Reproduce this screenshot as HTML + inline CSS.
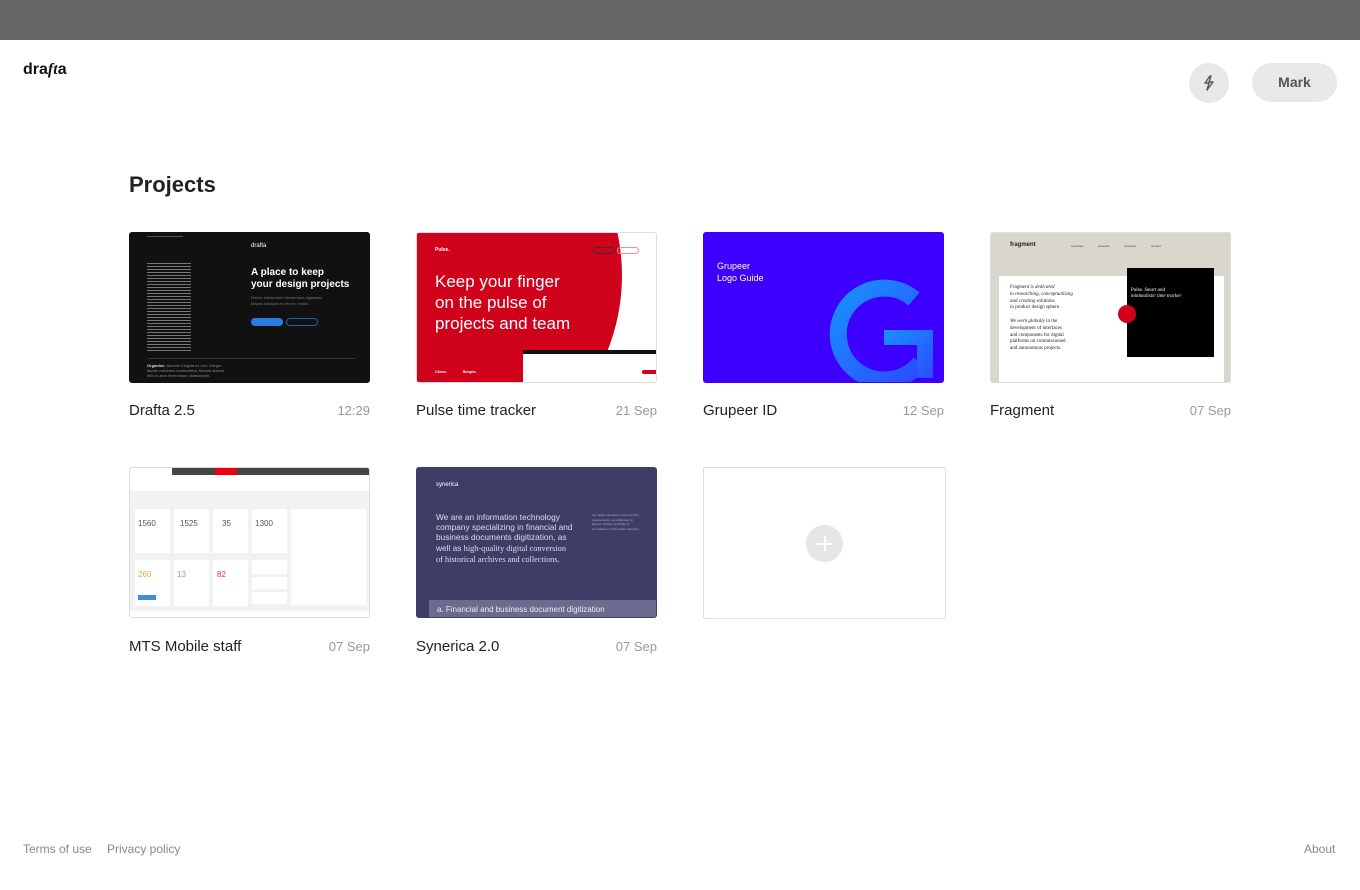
<!DOCTYPE html>
<html><head><meta charset="utf-8"><style>
*{margin:0;padding:0;box-sizing:border-box}
body{width:1360px;height:890px;background:#fff;font-family:"Liberation Sans",sans-serif;position:relative;overflow:hidden;color:#222}
.top{position:absolute;left:0;top:0;width:1360px;height:40px;background:#666}
.abs{position:absolute}
.card{position:absolute;width:241px;height:151px;border-radius:3px;overflow:hidden;border:1px solid #ddd}
.t{position:absolute;font-size:15px;color:#222}
.d{position:absolute;font-size:13px;color:#999;text-align:right;width:100px}
.foot{position:absolute;top:842px;font-size:12px;color:#888}
</style></head><body>
<div class="top"></div>
<div class="abs" style="left:23px;top:61px;font-size:16px;font-weight:bold;color:#111">dra<i style="font-family:'Liberation Serif',serif">ft</i>a</div>
<div class="abs" style="left:1189px;top:63px;width:40px;height:40px;border-radius:50%;background:#e8e8e8">
<svg width="40" height="40" viewBox="0 0 40 40"><path d="M21 13l-5 7h4l-2 7 6-8h-4l2-6z" fill="none" stroke="#555" stroke-width="1.4" stroke-linejoin="round"/></svg></div>
<div class="abs" style="left:1252px;top:63px;width:85px;height:39px;border-radius:20px;background:#e8e8e8;font-size:14px;font-weight:bold;color:#555;text-align:center;line-height:39px">Mark</div>
<div class="abs" style="left:129px;top:172px;font-size:22px;font-weight:bold;color:#222">Projects</div>

<!-- Drafta -->
<div class="card" style="left:129px;top:232px;background:#111;border-color:#111">
<div class="abs" style="left:17px;top:3px;width:36px;height:1px;background:#555"></div>
<div class="abs" style="left:17px;top:30px;width:44px;height:90px;background:repeating-linear-gradient(#777 0 1px,transparent 1px 3px)"></div>
<div class="abs" style="left:121px;top:10px;color:#fff;font-size:6px">drafta</div>
<div class="abs" style="left:121px;top:34px;color:#fff;font-size:10px;font-weight:bold;line-height:12px">A place to keep<br>your design projects</div>
<div class="abs" style="left:121px;top:62px;color:#777;font-size:4px;line-height:6px">Donec elementum elementum dignissim.<br>Mauris volutpat et elit nec mollis.</div>
<div class="abs" style="left:121px;top:85px;width:32px;height:8px;border-radius:4px;background:#2a7de1"></div>
<div class="abs" style="left:156px;top:85px;width:32px;height:8px;border-radius:4px;border:1px solid #2a5cb0"></div>
<div class="abs" style="left:17px;top:125px;width:208px;height:1px;background:#333"></div>
<div class="abs" style="left:17px;top:130px;color:#888;font-size:4px;line-height:5px"><b style="color:#ddd">Organise.</b> Aenean fringilla ex orci. Integer<br>iaculis maximus consectetur. Mauris dictum<br>felis in arcu fermentum ullamcorper.</div>
</div>
<div class="t" style="left:129px;top:402px">Drafta 2.5</div><div class="d" style="left:270px;top:403px">12:29</div>

<!-- Pulse -->
<div class="card" style="left:416px;top:232px;background:#fff">
<div class="abs" style="left:-200px;top:-160px;width:405px;height:405px;border-radius:50%;background:#d0021b"></div>
<div class="abs" style="left:18px;top:14px;color:#fff;font-size:5px;font-weight:bold">Pulse.</div>
<div class="abs" style="left:18px;top:38px;color:#fff;font-size:17px;line-height:21px">Keep your finger<br>on the pulse of<br>projects and team</div>
<div class="abs" style="left:176px;top:14px;width:22px;height:7px;border:1px solid #333;border-radius:4px"></div>
<div class="abs" style="left:200px;top:14px;width:22px;height:7px;border:1px solid #f88;border-radius:4px"></div>
<div class="abs" style="left:106px;top:117px;width:136px;height:36px;background:#fff;border-top:4px solid #111"></div>
<div class="abs" style="left:225px;top:137px;width:15px;height:4px;background:#d0021b;border-radius:2px"></div>
<div class="abs" style="left:18px;top:136px;color:#fff;font-size:4px;font-weight:bold">Clean.&nbsp;&nbsp;&nbsp;&nbsp;&nbsp;&nbsp;&nbsp;&nbsp;&nbsp;&nbsp;&nbsp;&nbsp;&nbsp;&nbsp;Simple.</div>
</div>
<div class="t" style="left:416px;top:402px">Pulse time tracker</div><div class="d" style="left:557px;top:403px">21 Sep</div>

<!-- Grupeer -->
<div class="card" style="left:703px;top:232px;background:#3d00ff;border-color:#3d00ff">
<div class="abs" style="left:13px;top:27px;color:#fff;font-size:9px;line-height:12px">Grupeer<br>Logo Guide</div>
<svg class="abs" style="left:118px;top:34px" width="115" height="115" viewBox="0 0 115 115"><defs><linearGradient id="g" x1="0" y1="0" x2="1" y2="1"><stop offset="0" stop-color="#1a90ff"/><stop offset="1" stop-color="#2a4cff"/></linearGradient></defs>
<path d="M92 32A46 46 0 1 0 98 96" fill="none" stroke="url(#g)" stroke-width="17"/><path d="M62 63h49v48h-16v-33h-33z" fill="url(#g)"/></svg>
</div>
<div class="t" style="left:703px;top:402px">Grupeer ID</div><div class="d" style="left:844px;top:403px">12 Sep</div>

<!-- Fragment -->
<div class="card" style="left:990px;top:232px;background:#d9d6ce">
<div class="abs" style="left:19px;top:9px;font-size:6px;font-weight:bold;color:#222">fragment</div>
<div class="abs" style="left:80px;top:11px;font-size:3px;color:#444;word-spacing:14px">expertise selected company contact</div>
<div class="abs" style="left:8px;top:43px;width:225px;height:110px;background:#fff"></div>
<div class="abs" style="left:19px;top:52px;font-family:'Liberation Serif',serif;font-size:5px;line-height:6.8px;color:#222">Fragment <i>is dedicated<br>to researching, conceptualising<br>and creating</i> solutions<br>in product design sphere.<br><br><i>We work globally</i> in the<br>development of interfaces<br>and components for digital<br>platforms on commissioned<br>and autonomous projects.</div>
<div class="abs" style="left:136px;top:35px;width:87px;height:89px;background:#000"></div>
<div class="abs" style="left:140px;top:55px;font-family:'Liberation Serif',serif;font-size:5px;color:#fff;line-height:6px">Pulse. <i>Smart and<br>minimalistic time tracker</i></div>
<div class="abs" style="left:127px;top:72px;width:18px;height:18px;border-radius:50%;background:#d0021b"></div>
</div>
<div class="t" style="left:990px;top:402px">Fragment</div><div class="d" style="left:1131px;top:403px">07 Sep</div>

<!-- MTS -->
<div class="card" style="left:129px;top:467px;background:#f2f2f2">
<div class="abs" style="left:0;top:0;width:241px;height:7px;background:#444"></div>
<div class="abs" style="left:0;top:0;width:42px;height:7px;background:#fff"></div>
<div class="abs" style="left:85px;top:0;width:22px;height:7px;background:#e01"></div>
<div class="abs" style="left:0;top:7px;width:241px;height:16px;background:#fff"></div>
<div class="abs" style="left:5px;top:41px;width:35px;height:44px;background:#fff"></div>
<div class="abs" style="left:44px;top:41px;width:35px;height:44px;background:#fff"></div>
<div class="abs" style="left:83px;top:41px;width:35px;height:44px;background:#fff"></div>
<div class="abs" style="left:122px;top:41px;width:35px;height:44px;background:#fff"></div>
<div class="abs" style="left:5px;top:92px;width:35px;height:46px;background:#fff"></div>
<div class="abs" style="left:44px;top:92px;width:35px;height:46px;background:#fff"></div>
<div class="abs" style="left:83px;top:92px;width:35px;height:46px;background:#fff"></div>
<div class="abs" style="left:122px;top:92px;width:35px;height:14px;background:#fff"></div>
<div class="abs" style="left:122px;top:109px;width:35px;height:12px;background:#fff"></div>
<div class="abs" style="left:122px;top:124px;width:35px;height:12px;background:#fff"></div>
<div class="abs" style="left:161px;top:41px;width:75px;height:96px;background:#fff"></div>
<div class="abs" style="left:8px;top:51px;font-size:8px;color:#555;word-spacing:22px">1560 1525 35 1300</div>
<div class="abs" style="left:8px;top:102px;font-size:8px;color:#f5a623">260</div>
<div class="abs" style="left:47px;top:102px;font-size:8px;color:#999">13</div>
<div class="abs" style="left:87px;top:102px;font-size:8px;color:#e33">82</div>
<div class="abs" style="left:8px;top:127px;width:18px;height:5px;background:#3d8fd8"></div>
<div class="abs" style="left:0;top:143px;width:241px;height:8px;background:#fff"></div>
</div>
<div class="t" style="left:129px;top:638px">MTS Mobile staff</div><div class="d" style="left:270px;top:639px">07 Sep</div>

<!-- Synerica -->
<div class="card" style="left:416px;top:467px;background:#3f3d66;border-color:#3f3d66">
<div class="abs" style="left:19px;top:14px;color:#fff;font-size:6px">synerica</div>
<div class="abs" style="left:19px;top:44px;color:#dcdcec;font-size:8.3px;line-height:10.2px">We are an information technology<br>company specializing in financial and<br>business documents digitization, as<br>well as <span style="font-family:'Liberation Serif',serif">high-quality digital conversion<br>of historical archives and collections.</span></div>
<div class="abs" style="left:175px;top:45px;color:#aab;font-size:3px;line-height:4.5px">Our entire operation meets the ISO<br>requirements, as evidenced by<br>Bureau Veritas Certificate of<br>Compliance in Information Security.</div>
<div class="abs" style="left:12px;top:132px;width:229px;height:19px;background:#6b6a8f;color:#eee;font-size:8px;line-height:19px;padding-left:8px">a. Financial and business document digitization</div>
</div>
<div class="t" style="left:416px;top:638px">Synerica 2.0</div><div class="d" style="left:557px;top:639px">07 Sep</div>

<!-- add -->
<div class="abs" style="left:703px;top:467px;width:243px;height:152px;border:1px solid #ddd;border-radius:2px"></div>
<div class="abs" style="left:806px;top:525px;width:37px;height:37px;border-radius:50%;background:#e6e6e6"></div>
<div class="abs" style="left:817px;top:542.5px;width:15px;height:2px;background:#fff"></div>
<div class="abs" style="left:823.5px;top:536px;width:2px;height:15px;background:#fff"></div>

<div class="foot" style="left:23px">Terms of use</div>
<div class="foot" style="left:107px">Privacy policy</div>
<div class="foot" style="left:1304px">About</div>
</body></html>
